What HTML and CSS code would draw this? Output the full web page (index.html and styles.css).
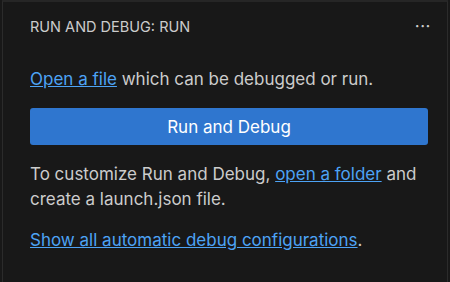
FILE: index.html
```html
<!DOCTYPE html>
<html lang="en">
<head>
    <meta charset="UTF-8">
    <title>Run and Debug</title>
    <link rel="stylesheet" href="styles.css">
</head>
<body>
    <div class="sidebar">
        <div class="pane-header">
            <span class="pane-title">RUN AND DEBUG: RUN</span>
            <span class="pane-actions">&middot;&middot;&middot;</span>
        </div>

        <div class="welcome">
            <p><a href="#">Open a file</a> which can be debugged or run.</p>
            <button class="run-button">Run and Debug</button>
            <p>To customize Run and Debug, <a href="#">open a folder</a> and<br>create a launch.json file.</p>
            <p><a href="#">Show all automatic debug configurations</a>.</p>
        </div>
    </div>
</body>
</html>
```

FILE: styles.css
```css
body {
    margin: 0;
    padding: 0;
    background-color: #181818;
    font-family: Inter, "Liberation Sans", Arial, sans-serif;
    color: #cccccc;
}

.sidebar {
    height: 282px;
    box-sizing: border-box;
    margin-left: 2px;
    margin-right: 2px;
    border-top: 2px solid #262626;
    border-left: 1px solid #2b2b2b;
    border-right: 1px solid #2b2b2b;
    background-color: #181818;
}

.pane-header {
    display: flex;
    justify-content: space-between;
    align-items: center;
    height: 48px;
    padding: 0 16px 0 27px;
}

.pane-title {
    font-size: 14.5px;
    color: #cccccc;
}

.pane-actions {
    font-size: 17px;
    letter-spacing: 0.5px;
    color: #cccccc;
}

.welcome {
    padding: 17px 19px 0 27px;
}

.welcome p {
    margin: 0 0 16px 0;
    font-size: 17px;
    line-height: 25px;
}

.welcome a {
    color: #4da3f5;
    text-decoration: underline;
}

.run-button {
    display: block;
    width: 100%;
    height: 37px;
    margin: 0 0 17px 0;
    background-color: #2f76cf;
    color: #ffffff;
    border: none;
    border-radius: 3px;
    font-family: inherit;
    font-size: 17px;
}
```
